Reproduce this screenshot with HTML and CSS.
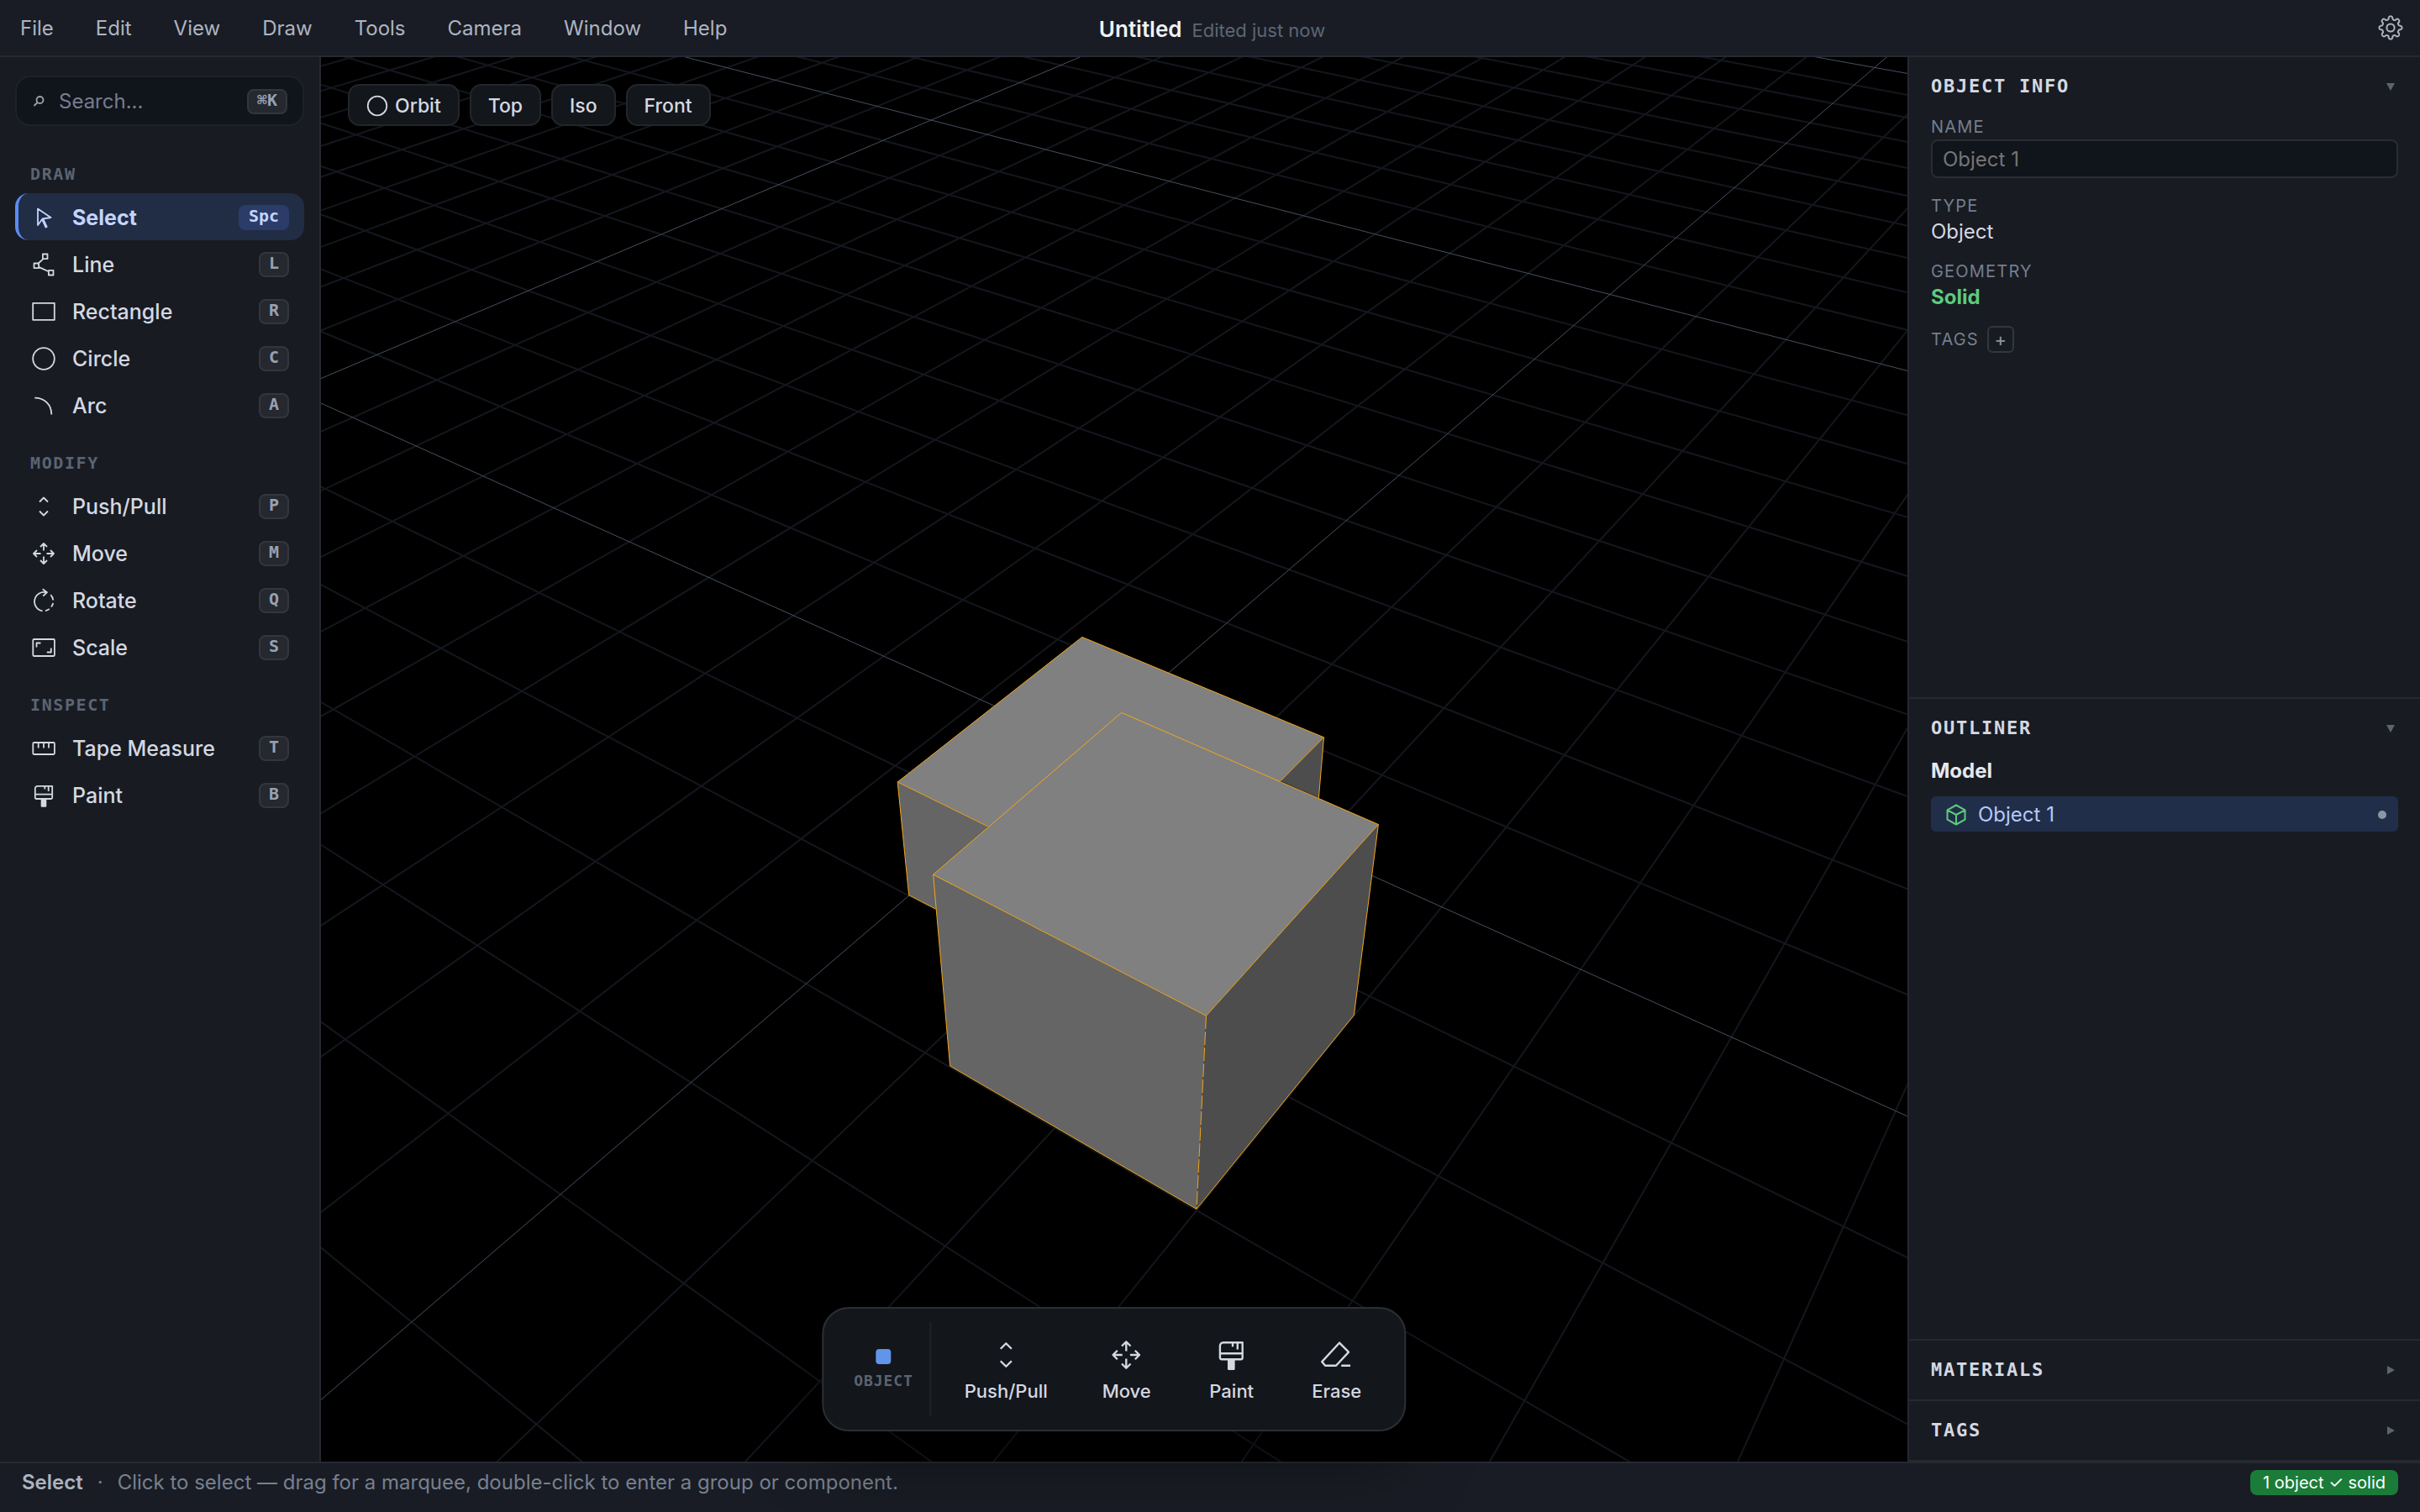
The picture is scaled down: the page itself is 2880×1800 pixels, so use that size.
FILE: index.html
```html
<!DOCTYPE html>
<html lang="en">
<head>
<meta charset="utf-8">
<title>Untitled</title>
<link rel="stylesheet" href="styles.css">
</head>
<body>
<svg class="defs" aria-hidden="true">
  <symbol id="i-select" viewBox="0 0 32 32"><path d="M9 5.5V25l5.5-7.5L24.5 16z"/><path class="thick" d="M14.8 18l4.6 10"/></symbol>
  <symbol id="i-line" viewBox="0 0 32 32"><path d="M14.9 3.5h5.6v5.6h-5.6zM4.5 14.5h5.6v5.6H4.500zM21.900 22.900h5.600v5.600h-5.600zM15.600 9.100l-6 5.400M10.100 18.900l11.800 5.300"/></symbol>
  <symbol id="i-rect" viewBox="0 0 32 32"><path d="M3.200 5.800h25.600v20H3.200z"/></symbol>
  <symbol id="i-circle" viewBox="0 0 32 32"><circle cx="16" cy="16" r="12.800"/></symbol>
  <symbol id="i-orbit" viewBox="0 0 26 26"><circle cx="13" cy="13" r="11.300"/></symbol>
  <symbol id="i-arc" viewBox="0 0 32 32"><path d="M5.300 6.700C17 6.700 25.300 14.500 25.300 26.500"/></symbol>
  <symbol id="i-push" viewBox="0 0 32 32"><path d="M11 10.500l5-5 5 5M11 21.500l5 5 5-5"/></symbol>
  <symbol id="i-move" viewBox="0 0 32 32"><path d="M16 12.500V4M12 8l4-4 4 4M16 19.500V28M12 24l4 4 4-4M12.500 16H4M8 12l-4 4 4 4M19.500 16H28M24 12l4 4-4 4"/></symbol>
  <symbol id="i-rotate" viewBox="0 0 32 32"><path d="M14.700 2.200L20 6.200l-4.700 4.300M19.500 6.300A11.300 11.300 0 1 0 14.500 28.300M18 28.200a11.300 11.300 0 0 0 4.800-2.300M25 23.500a11.300 11.300 0 0 0 2.200-4.500M27.300 15.500a11.300 11.300 0 0 0-3-6.300"/></symbol>
  <symbol id="i-scale" viewBox="0 0 32 32"><rect x="3.300" y="6" width="25.600" height="20" rx="1.200"/><path d="M7.500 15.500v-5h5M24.800 16.500v5h-5"/></symbol>
  <symbol id="i-tape" viewBox="0 0 32 32"><rect x="3.300" y="9" width="25.600" height="14" rx="1.200"/><path d="M9.700 9v6.500M16 9v6.500M22 9v6.500"/></symbol>
  <symbol id="i-paint" viewBox="0 0 32 32"><path d="M8.800 4.800H26.200V18.500a1.500 1.500 0 0 1-1.500 1.500H7.300a1.500 1.500 0 0 1-1.500-1.500V7.800a3 3 0 0 1 3-3zM5.800 14.700h20.400M17.300 5v3.500M21.700 5v6"/><path class="solid" d="M12.700 20h6.600V28.500a1.200 1.200 0 0 1-1.200 1.200h-4.200a1.200 1.200 0 0 1-1.200-1.200z"/></symbol>
  <symbol id="i-erase" viewBox="0 0 32 32"><path d="M18.900 5l8.300 8.400L15.800 25.700H6L3 22.200zM20.500 25.700h8.300"/></symbol>
  <symbol id="i-gear" viewBox="0 0 32 32"><path d="M27.770 13.660A2.400 2.400 0 0 1 27.770 18.340A2.400 2.400 0 0 0 25.980 22.670A2.400 2.400 0 0 1 22.670 25.980A2.400 2.400 0 0 0 18.340 27.770A2.400 2.400 0 0 1 13.660 27.770A2.400 2.400 0 0 0 9.330 25.980A2.400 2.400 0 0 1 6.020 22.670A2.400 2.400 0 0 0 4.230 18.340A2.400 2.400 0 0 1 4.230 13.660A2.400 2.400 0 0 0 6.020 9.330A2.400 2.400 0 0 1 9.330 6.020A2.400 2.400 0 0 0 13.660 4.230A2.400 2.400 0 0 1 18.340 4.230A2.400 2.400 0 0 0 22.670 6.020A2.400 2.400 0 0 1 25.980 9.330A2.400 2.400 0 0 0 27.770 13.660z"/><circle cx="16" cy="16" r="4.600"/></symbol>
  <symbol id="i-search" viewBox="0 0 16 16"><circle cx="9.500" cy="6" r="4"/><path d="M6.500 9L2.500 13"/></symbol>
  <symbol id="i-cube" viewBox="0 0 28 28"><path d="M14 2.500l10.500 5.800v11.400L14 25.500 3.500 19.700V8.300zM3.500 8.300L14 14l10.500-5.700M14 14v11.500"/></symbol>
  <symbol id="i-down" viewBox="0 0 10 10"><path class="solid" d="M0 1h10L5 10z"/></symbol>
  <symbol id="i-right" viewBox="0 0 10 10"><path class="solid" d="M1 0v10l9-5z"/></symbol>
</svg>

<div class="app">
  <header class="topbar">
    <nav class="menu" aria-label="Main menu">
      <button>File</button><button>Edit</button><button>View</button><button>Draw</button><button>Tools</button><button>Camera</button><button>Window</button><button>Help</button>
    </nav>
    <div class="doc"><h1>Untitled</h1><span>Edited just now</span></div>
    <div class="topbar-end"><button class="settings" aria-label="Settings"><svg class="icon"><use href="#i-gear"/></svg></button></div>
  </header>

  <aside class="sidebar">
    <button class="search"><svg class="search-icon"><use href="#i-search"/></svg><span>Search...</span><kbd>⌘K</kbd></button>
    <section class="group">
      <h2>DRAW</h2>
      <button class="tool active"><svg class="icon"><use href="#i-select"/></svg><span>Select</span><kbd>Spc</kbd></button>
      <button class="tool"><svg class="icon"><use href="#i-line"/></svg><span>Line</span><kbd>L</kbd></button>
      <button class="tool"><svg class="icon"><use href="#i-rect"/></svg><span>Rectangle</span><kbd>R</kbd></button>
      <button class="tool"><svg class="icon"><use href="#i-circle"/></svg><span>Circle</span><kbd>C</kbd></button>
      <button class="tool"><svg class="icon"><use href="#i-arc"/></svg><span>Arc</span><kbd>A</kbd></button>
    </section>
    <section class="group">
      <h2>MODIFY</h2>
      <button class="tool"><svg class="icon"><use href="#i-push"/></svg><span>Push/Pull</span><kbd>P</kbd></button>
      <button class="tool"><svg class="icon"><use href="#i-move"/></svg><span>Move</span><kbd>M</kbd></button>
      <button class="tool"><svg class="icon"><use href="#i-rotate"/></svg><span>Rotate</span><kbd>Q</kbd></button>
      <button class="tool"><svg class="icon"><use href="#i-scale"/></svg><span>Scale</span><kbd>S</kbd></button>
    </section>
    <section class="group">
      <h2>INSPECT</h2>
      <button class="tool"><svg class="icon"><use href="#i-tape"/></svg><span>Tape Measure</span><kbd>T</kbd></button>
      <button class="tool"><svg class="icon"><use href="#i-paint"/></svg><span>Paint</span><kbd>B</kbd></button>
    </section>
  </aside>

  <main class="viewport">
    <svg class="scene" viewBox="382 68 1888 1672" preserveAspectRatio="xMidYMid slice" role="img" aria-label="3D model">
      <g id="grid"></g>
      <g class="box">
        <path class="top" d="M1287.800 758.400L1575.500 877.800L1374.100 1080.900L1068.200 931z"/>
        <path class="front" d="M1068.200 931L1176 984L1113.500 1082L1081.600 1065.600z"/>
        <path class="side" d="M1575.500 877.800L1524 929.700L1569.400 949.800z"/>
        <path class="edges" d="M1176 984L1068.200 931L1287.800 758.400L1575.500 877.800L1524 929.700M1575.500 877.800L1569.400 949.800M1068.200 931L1081.600 1065.600L1113.500 1082"/>
      </g>
      <g class="box">
        <path class="top" d="M1334.700 848.400L1640.400 981.500L1435.500 1209.300L1110.600 1041.200z"/>
        <path class="front" d="M1110.600 1041.200L1435.500 1209.300L1424 1439.300L1130.600 1269z"/>
        <path class="side" d="M1640.400 981.500L1435.500 1209.300L1424 1439.300L1611.400 1208.400z"/>
        <path class="edges" d="M1334.700 848.400L1640.400 981.500L1435.500 1209.300L1110.600 1041.200zM1110.600 1041.200L1130.600 1269L1424 1439.300L1611.400 1208.400L1640.400 981.500"/>
        <path class="edges dashed" d="M1435.500 1209.300L1424 1439.300"/>
      </g>
    </svg>
    <div class="views">
      <button><svg class="orbit-icon"><use href="#i-orbit"/></svg>Orbit</button><button>Top</button><button>Iso</button><button>Front</button>
    </div>
    <div class="dock">
      <div class="context"><i class="swatch"></i><span>OBJECT</span></div>
      <div class="actions">
        <button><svg class="icon"><use href="#i-push"/></svg>Push/Pull</button>
        <button><svg class="icon"><use href="#i-move"/></svg>Move</button>
        <button><svg class="icon"><use href="#i-paint"/></svg>Paint</button>
        <button><svg class="icon"><use href="#i-erase"/></svg>Erase</button>
      </div>
    </div>
  </main>

  <aside class="inspector">
    <section class="panel open">
      <button class="panel-head">OBJECT INFO<svg class="caret"><use href="#i-down"/></svg></button>
      <div class="field"><label for="name">NAME</label><input id="name" type="text" placeholder="Object 1"></div>
      <div class="field"><span class="label">TYPE</span><span class="value">Object</span></div>
      <div class="field"><span class="label">GEOMETRY</span><span class="value solid-state">Solid</span></div>
      <div class="tags"><span class="label">TAGS</span><button aria-label="Add tag">+</button></div>
    </section>
    <section class="panel open">
      <button class="panel-head">OUTLINER<svg class="caret"><use href="#i-down"/></svg></button>
      <h3>Model</h3>
      <button class="node"><svg class="cube"><use href="#i-cube"/></svg><span>Object 1</span><i class="dot"></i></button>
    </section>
    <section class="panel">
      <button class="panel-head">MATERIALS<svg class="caret"><use href="#i-right"/></svg></button>
    </section>
    <section class="panel">
      <button class="panel-head">TAGS<svg class="caret"><use href="#i-right"/></svg></button>
    </section>
  </aside>

  <footer class="status">
    <strong>Select</strong><span class="sep">·</span><span>Click to select — drag for a marquee, double-click to enter a group or component.</span>
    <span class="badge">1 object ✓ solid</span>
  </footer>
</div>
<script src="grid.js"></script>
</body>
</html>
```
FILE: styles.css
```css
* { box-sizing: border-box; }

body {
  margin: 0;
  background: #181b22;
  color: #d4d8e1;
  font: 25px/32px Inter, "Liberation Sans", sans-serif;
}

button {
  margin: 0;
  padding: 0;
  border: 0;
  background: none;
  color: inherit;
  font: inherit;
  text-align: left;
}

h1, h2, h3 { margin: 0; }

.defs { position: absolute; width: 0; height: 0; }

svg {
  fill: none;
  stroke: currentColor;
  stroke-width: 1.8;
  stroke-linejoin: round;
  flex: none;
}

.thick { stroke-width: 3; }
.solid { fill: currentColor; stroke: none; }
.icon { width: 32px; height: 32px; }

.app {
  display: grid;
  grid-template: "top top top" auto "side view info" 1fr "status status status" auto / 382px 1fr 610px;
  height: 100vh;
}

.topbar {
  grid-area: top;
  display: grid;
  grid-template-columns: 1fr auto 1fr;
  align-items: center;
  height: 68px;
  padding: 0 19px 0 24px;
  border-bottom: 2px solid #262930;
  background: #191c24;
}

.menu { display: flex; gap: 50px; padding-top: 1px; color: #adb4c0; font-size: 24px; }

.doc { display: flex; align-items: baseline; gap: 12px; padding-top: 4px; }
.doc h1 { color: #f1f2f5; font-size: 26px; font-weight: 600; line-height: 32px; }
.doc span { color: #5d6674; font-size: 22px; }

.topbar-end { display: flex; justify-content: flex-end; }
.settings { display: flex; color: #adb4c0; }
.settings .icon { stroke-width: 2; }

.sidebar {
  grid-area: side;
  padding: 22px 18px;
  border-right: 2px solid #262930;
  background: #181b22;
}

.search {
  display: flex;
  align-items: center;
  width: 100%;
  height: 60px;
  padding: 2px 18px 0;
  border: 2px solid #1e2127;
  border-radius: 18px;
  background: #10141b;
  color: #757e8d;
  font-size: 24px;
}
.search span { flex: 1; padding-left: 16px; }
.search-icon { width: 16px; height: 16px; color: #9aa2af; }

kbd {
  padding: 0 10px 4px;
  border: 2px solid #33363c;
  border-radius: 8px;
  background: #25282f;
  color: #98a1b0;
  font: bold 20px/22px "DejaVu Sans Mono", monospace;
}

.group { padding-top: 45px; }
.group + .group { padding-top: 29px; }

.group h2 {
  margin-bottom: 11px;
  padding: 0 18px;
  color: #5b6472;
  font: bold 20px/24px "DejaVu Sans Mono", monospace;
  letter-spacing: 0.08em;
}

.tool {
  display: flex;
  align-items: center;
  width: 100%;
  height: 56px;
  padding: 2px 18px 0 14px;
  border-left: 4px solid transparent;
  border-radius: 16px;
  font-weight: 500;
}
.tool span { flex: 1; padding-left: 18px; }
.tool.active {
  border-left-color: #5b8cf5;
  background: #212c45;
  color: #c3d4fd;
  font-weight: 700;
}
.tool.active kbd { border-color: #2b3c68; background: #2b3c68; color: #c3d4fd; }

.viewport {
  grid-area: view;
  position: relative;
  min-width: 0;
  min-height: 0;
  background: #000;
}

.scene { position: absolute; inset: 0; width: 100%; height: 100%; }
.grid-line { stroke: #14171e; stroke-width: 2; }
.grid-line.major { stroke: #47505f; stroke-width: 1; }
.box path { stroke: none; }
.box .top { fill: #808080; }
.box .front { fill: #656565; }
.box .side { fill: #4d4d4d; }
.box .edges { stroke: #f5a617; stroke-width: 1; }
.box .dashed { stroke-dasharray: 16 3; }

.views { position: absolute; top: 32px; left: 32px; display: flex; gap: 12px; }
.views button {
  display: flex;
  align-items: center;
  gap: 8px;
  height: 50px;
  padding: 2px 20px 0;
  border: 2px solid #22262b;
  border-radius: 14px;
  background: #13161b;
  font-size: 23px;
  font-weight: 500;
}
.orbit-icon { width: 26px; height: 26px; }

.dock {
  position: absolute;
  z-index: 2;
  bottom: 36px;
  left: 50%;
  transform: translateX(-50%);
  display: flex;
  gap: 11px;
  height: 148px;
  padding: 16px 22px 16px 16px;
  border: 2px solid #2b2f34;
  border-radius: 32px;
  background: #13161b;
  box-shadow: 0 24px 80px rgba(0, 0, 0, 0.5);
}
.context {
  display: flex;
  flex-direction: column;
  align-items: center;
  justify-content: center;
  gap: 8px;
  padding: 2px 20px 0;
  border-right: 2px solid #1f2328;
  color: #5b6472;
  font: bold 18px/24px "DejaVu Sans Mono", monospace;
  letter-spacing: 0.05em;
}
.swatch { width: 18px; height: 18px; border-radius: 4px; background: #6095ea; }
.actions { display: flex; gap: 7px; }
.actions button {
  display: flex;
  flex-direction: column;
  align-items: center;
  justify-content: center;
  min-width: 118px;
  padding: 4px 28px 0;
  font-size: 22px;
  font-weight: 500;
}
.actions .icon { width: 42px; height: 42px; margin-bottom: 6px; }

.inspector {
  grid-area: info;
  display: flex;
  flex-direction: column;
  border-left: 2px solid #262930;
  background: #181b22;
}

.panel { padding: 18px 26px; border-bottom: 2px solid #262930; }
.panel.open { flex: 1; }

.panel-head {
  display: flex;
  align-items: center;
  justify-content: space-between;
  width: 100%;
  height: 34px;
  padding-right: 4px;
  font: bold 22px/32px "DejaVu Sans Mono", monospace;
  letter-spacing: 0.08em;
}
.caret { width: 10px; height: 10px; color: #5b6572; }

.field { display: flex; flex-direction: column; gap: 2px; padding-bottom: 18px; }
.panel-head + .field { padding-top: 18px; }
.field label, .label { color: #757e8d; font-size: 20px; line-height: 26px; letter-spacing: 0.06em; }
.field input {
  width: 100%;
  height: 46px;
  margin-bottom: 2px;
  padding: 0 12px;
  border: 2px solid #2a2d32;
  border-radius: 8px;
  background: #10141b;
  color: #d4d8e1;
  font: 24px/32px Inter, "Liberation Sans", sans-serif;
}
.field input::placeholder { color: #757575; opacity: 1; }
.value { font-size: 24px; }
.solid-state { color: #5ccb7b; font-weight: 700; }

.tags { display: flex; align-items: center; gap: 10px; }
.tags button {
  width: 32px;
  height: 32px;
  border: 2px solid #32363d;
  border-radius: 6px;
  color: #8d96a5;
  font-size: 22px;
  line-height: 26px;
  text-align: center;
}

.panel h3 { padding: 18px 0 14px; color: #e6e8ed; font-size: 24px; font-weight: 700; line-height: 32px; }
.node {
  display: flex;
  align-items: center;
  gap: 12px;
  width: 100%;
  height: 42px;
  padding: 1px 14px 0 16px;
  border-radius: 6px;
  background: #212e49;
  color: #b4c8fa;
  font-size: 24px;
}
.node span { flex: 1; }
.cube { width: 28px; height: 28px; color: #5ccb7b; stroke-width: 2; }
.dot { width: 10px; height: 10px; border-radius: 50%; background: #8e96a5; }

.status {
  grid-area: status;
  display: flex;
  align-items: center;
  gap: 17px;
  height: 60px;
  padding: 0 26px 12px;
  border-top: 2px solid #262930;
  background: #191c24;
  color: #77808f;
  font-size: 24px;
}
.status strong { color: #adb4c0; font-weight: 600; }
.badge {
  margin-left: auto;
  padding: 0 15px;
  border-radius: 8px;
  background: #1b7b38;
  color: #fff;
  font-size: 20px;
  line-height: 30px;
}
```
FILE: grid.js
```javascript
// Ground plane grid: one line per unit, every tenth line is a major one.
const EXTENT = 50;
const NEAR = 0.15;

const depth = (a, b) => 1 + 0.0495 * a - 0.0351 * b;

function project(a, b) {
  const w = depth(a, b);
  return [(1289.4 + 157.5 * a + 81.9 * b) / w, (888 - 36.4 * a + 26 * b) / w];
}

function addLine(parent, from, to, major) {
  let [p, q] = [from, to];
  const wp = depth(...p), wq = depth(...q);
  if (wp < NEAR && wq < NEAR) return;
  const cut = (s, ws, t, wt) => {
    const k = (NEAR - ws) / (wt - ws);
    return [s[0] + (t[0] - s[0]) * k, s[1] + (t[1] - s[1]) * k];
  };
  if (wp < NEAR) p = cut(p, wp, q, wq);
  else if (wq < NEAR) q = cut(q, wq, p, wp);
  const [x1, y1] = project(...p);
  const [x2, y2] = project(...q);
  const line = document.createElementNS("http://www.w3.org/2000/svg", "line");
  line.setAttribute("x1", x1);
  line.setAttribute("y1", y1);
  line.setAttribute("x2", x2);
  line.setAttribute("y2", y2);
  line.setAttribute("class", major ? "grid-line major" : "grid-line");
  parent.append(line);
}

const grid = document.getElementById("grid");
for (const major of [false, true]) {
  for (let i = -EXTENT; i <= EXTENT; i++) {
    if ((i % 10 === 0) !== major) continue;
    addLine(grid, [i, -EXTENT], [i, EXTENT], major);
    addLine(grid, [-EXTENT, i], [EXTENT, i], major);
  }
}
```
